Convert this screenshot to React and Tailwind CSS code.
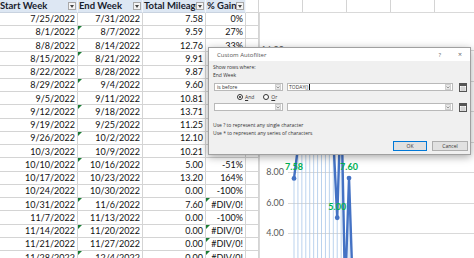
import React from "react";

const rows = [
  ["7/25/2022", "7/31/2022", "7.58", "0%"],
  ["8/1/2022", "8/7/2022", "9.59", "27%"],
  ["8/8/2022", "8/14/2022", "12.76", "33%"],
  ["8/15/2022", "8/21/2022", "9.91", "-22%"],
  ["8/22/2022", "8/28/2022", "9.87", "0%"],
  ["8/29/2022", "9/4/2022", "9.60", "-3%"],
  ["9/5/2022", "9/11/2022", "10.81", "13%"],
  ["9/12/2022", "9/18/2022", "13.71", "27%"],
  ["9/19/2022", "9/25/2022", "11.25", "-18%"],
  ["9/26/2022", "10/2/2022", "12.10", "8%"],
  ["10/3/2022", "10/9/2022", "10.21", "-16%"],
  ["10/10/2022", "10/16/2022", "5.00", "-51%"],
  ["10/17/2022", "10/23/2022", "13.20", "164%"],
  ["10/24/2022", "10/30/2022", "0.00", "-100%"],
  ["10/31/2022", "11/6/2022", "7.60", "#DIV/0!"],
  ["11/7/2022", "11/13/2022", "0.00", "-100%"],
  ["11/14/2022", "11/20/2022", "0.00", "#DIV/0!"],
  ["11/21/2022", "11/27/2022", "0.00", "#DIV/0!"],
  ["11/28/2022", "12/4/2022", "0.00", "#DIV/0!"],
];

const triB = [1, 3, 5, 7, 9, 11, 14, 16, 18];
const triD = [14, 16, 17, 18];

const values = [7.58, 9.59, 12.76, 9.91, 9.87, 9.6, 10.81, 13.71, 11.25, 12.1, 10.21, 5.0, 13.2, 0, 7.6, 0, 0, 0, 0];

function Tri() {
  return (
    <span className="absolute left-0 top-0 w-0 h-0 border-t-[4px] border-t-[#1a7d35] border-r-[4px] border-r-transparent" />
  );
}

function FilterBtn() {
  return (
    <div className="relative z-10 w-[8px] h-[8px] shrink-0 bg-[#f4f4f4] border border-[#a8a8a8] flex items-end justify-center pb-[1px]">
      <svg width="4" height="3" viewBox="0 0 4 3">
        <path d="M0 0h4L2 3z" fill="#444" />
      </svg>
    </div>
  );
}

function HeadCell({ w, label, first }) {
  return (
    <div
      className={`${w} h-full shrink-0 bg-[#dde7f3] border-r border-r-[#f3f6fb] border-b border-b-[#c9d3e0] flex items-center ${first ? "pl-0" : "pl-[1px]"} pr-[1px] gap-[1px] overflow-hidden`}
    >
      <span className="flex-1 min-w-0 whitespace-nowrap font-bold text-[9.5px] leading-none text-[#17202c]">
        {label}
      </span>
      <FilterBtn />
    </div>
  );
}

function Chev() {
  return (
    <div className="w-[6px] h-[6px] mr-[1px] bg-[#e8e8e8] border border-[#cfcfcf] flex items-center justify-center">
      <svg width="4" height="3" viewBox="0 0 4 3">
        <path d="M0.5 0.5L2 2L3.5 0.5" stroke="#777" strokeWidth="0.7" fill="none" />
      </svg>
    </div>
  );
}

function CalIcon() {
  return (
    <svg width="8" height="9" viewBox="0 0 8 9" className="shrink-0">
      <rect x="0.5" y="0.5" width="7" height="8" fill="#fff" stroke="#555" />
      <rect x="0.5" y="0.5" width="7" height="2.5" fill="#555" />
      <path d="M1 5h6M1 7h6M3 3v5M5 3v5" stroke="#999" strokeWidth="0.5" />
    </svg>
  );
}

function Radio({ on }) {
  return (
    <span className="w-[6px] h-[6px] rounded-full border border-[#333] bg-white flex items-center justify-center">
      {on && <span className="w-[2.5px] h-[2.5px] rounded-full bg-[#222]" />}
    </span>
  );
}

function Chart() {
  const px = (i) => 35 + i * 3.93;
  const py = (v) => 160 - (v - 8) * 15.25;
  const grid = [16, 14, 12, 10, 8, 6, 4, 2];
  const pts = values.map((v, i) => `${px(i)},${py(v)}`).join(" ");
  return (
    <div className="absolute left-[259px] top-[12px] w-[220px] h-[250px] bg-white border-l border-t border-[#d9d9d9]">
      <svg width="220" height="250" viewBox="0 0 220 250" className="absolute left-[-1px] top-[-1px]">
        {grid.map((g) => (
          <g key={g}>
            <line x1="29" x2="220" y1={Math.round(py(g)) + 0.5} y2={Math.round(py(g)) + 0.5} stroke="#d9d9d9" strokeWidth="1" />
            <text x="25" y={py(g) + 3} textAnchor="end" fontSize="9" fill="#595959" fontFamily="Lato, sans-serif">
              {g.toFixed(2)}
            </text>
          </g>
        ))}
        {values.map((v, i) =>
          v > 0 ? (
            <line key={i} x1={px(i)} x2={px(i)} y1={py(v)} y2="250" stroke="#a9c8ea" strokeWidth="0.8" />
          ) : null
        )}
        <polyline points={pts} fill="none" stroke="#4472c4" strokeWidth="2.4" strokeLinejoin="round" />
        {values.map((v, i) => (
          <circle key={i} cx={px(i)} cy={py(v)} r="2.4" fill="#4472c4" />
        ))}
        {values.map((v, i) =>
          v > 0 ? (
            <text key={i} x={px(i)} y={py(v) - 8} textAnchor="middle" fontSize="9" fontWeight="bold" fill="#00b050" fontFamily="Lato, sans-serif">
              {v.toFixed(2)}
            </text>
          ) : null
        )}
      </svg>
    </div>
  );
}

function Dialog() {
  return (
    <div className="absolute left-[208px] top-[47px] w-[263px] h-[108px] flex flex-col border border-[#a0a0a0] shadow-[0_2px_8px_rgba(0,0,0,0.35)] font-['Open_Sans',sans-serif] text-[#333]">
      <div className="h-[13px] shrink-0 bg-white flex items-center justify-between pl-[8px] pr-[8px]">
        <span className="text-[6px] leading-none text-[#555]">Custom Autofilter</span>
        <div className="flex items-center gap-[17px] text-[6px] leading-none text-[#666]">
          <span>?</span>
          <span className="text-[7px]">×</span>
        </div>
      </div>
      <div className="flex-1 bg-[#f0f0f0] pl-[4px] pr-[2px] pt-[2px] flex flex-col">
        <div className="text-[5px] leading-[8px]">Show rows where:</div>
        <div className="text-[5px] leading-[8px]">End Week</div>
        <div className="mt-[4px] h-[8px] flex items-center">
          <div className="ml-[1px] w-[69px] h-full bg-white border border-[#b9b9b9] flex items-center justify-between">
            <span className="pl-[2px] text-[5px] leading-none">is before</span>
            <Chev />
          </div>
          <div className="ml-[4px] w-[166px] h-full bg-white border border-[#b9b9b9] flex items-center justify-between">
            <span className="pl-[1px] text-[5px] leading-none flex items-center">
              TODAY()
              <span className="ml-[0.5px] w-[0.6px] h-[6px] bg-[#111]" />
            </span>
            <Chev />
          </div>
          <div className="ml-[6px]">
            <CalIcon />
          </div>
        </div>
        <div className="mt-[2px] h-[8px] flex items-center pl-[24px] gap-[2px] text-[5px] leading-none">
          <Radio on />
          <span>
            <span className="underline">A</span>nd
          </span>
          <span className="ml-[5px]" />
          <Radio />
          <span>
            <span className="underline">O</span>r
          </span>
        </div>
        <div className="mt-[2px] h-[8px] flex items-center">
          <div className="ml-[1px] w-[69px] h-full bg-white border border-[#b9b9b9] flex items-center justify-end">
            <Chev />
          </div>
          <div className="ml-[4px] w-[166px] h-full bg-white border border-[#b9b9b9] flex items-center justify-end">
            <Chev />
          </div>
          <div className="ml-[6px]">
            <CalIcon />
          </div>
        </div>
        <div className="mt-[10px] text-[5px] leading-[8px]">Use ? to represent any single character</div>
        <div className="text-[5px] leading-[8px]">Use * to represent any series of characters</div>
        <div className="mt-[4px] h-[10px] flex justify-end gap-[5px]">
          <div className="w-[34px] h-full bg-[#e1e1e1] border border-[#0078d7] flex items-center justify-center text-[5px] leading-none">
            OK
          </div>
          <div className="w-[36px] h-full bg-[#e1e1e1] border border-[#adadad] flex items-center justify-center text-[5px] leading-none">
            Cancel
          </div>
        </div>
      </div>
    </div>
  );
}

export default function App() {
  const cell = "relative h-full shrink-0 border-r border-b border-[#d4d4d4] flex items-center justify-end pr-[2px] text-[9px] leading-none text-[#111] whitespace-nowrap";
  return (
    <div className="relative w-[474px] h-[258px] overflow-hidden bg-white font-['Lato',sans-serif]">
      <div className="flex flex-col">
        <div className="h-[12.6px] flex">
          <HeadCell w="w-[78px]" label="Start Week" first />
          <HeadCell w="w-[65px]" label="End Week" />
          <HeadCell w="w-[63px]" label="Total Mileage" />
          <HeadCell w="w-[40px]" label="% Gain" />
          <div className="w-[13px] h-full shrink-0 border-r border-b border-[#d4d4d4]" />
          <div className="w-[44px] h-full shrink-0 border-r border-b border-[#d4d4d4]" />
          <div className="w-[44px] h-full shrink-0 border-r border-b border-[#d4d4d4]" />
          <div className="w-[44px] h-full shrink-0 border-r border-b border-[#d4d4d4]" />
          <div className="w-[44px] h-full shrink-0 border-r border-b border-[#d4d4d4]" />
          <div className="w-[44px] h-full shrink-0 border-r border-b border-[#d4d4d4]" />
        </div>
        {rows.map((r, i) => (
          <div key={i} className="h-[13.25px] flex shrink-0">
            <div className={`${cell} w-[78px]`}>{r[0]}</div>
            <div className={`${cell} w-[65px]`}>
              {triB.includes(i) && <Tri />}
              {r[1]}
            </div>
            <div className={`${cell} w-[63px]`}>{r[2]}</div>
            <div className={`${cell} w-[40px]`}>
              {triD.includes(i) && <Tri />}
              {r[3]}
            </div>
            <div className={`${cell} w-[13px]`} />
          </div>
        ))}
      </div>
      <Chart />
      <Dialog />
    </div>
  );
}
